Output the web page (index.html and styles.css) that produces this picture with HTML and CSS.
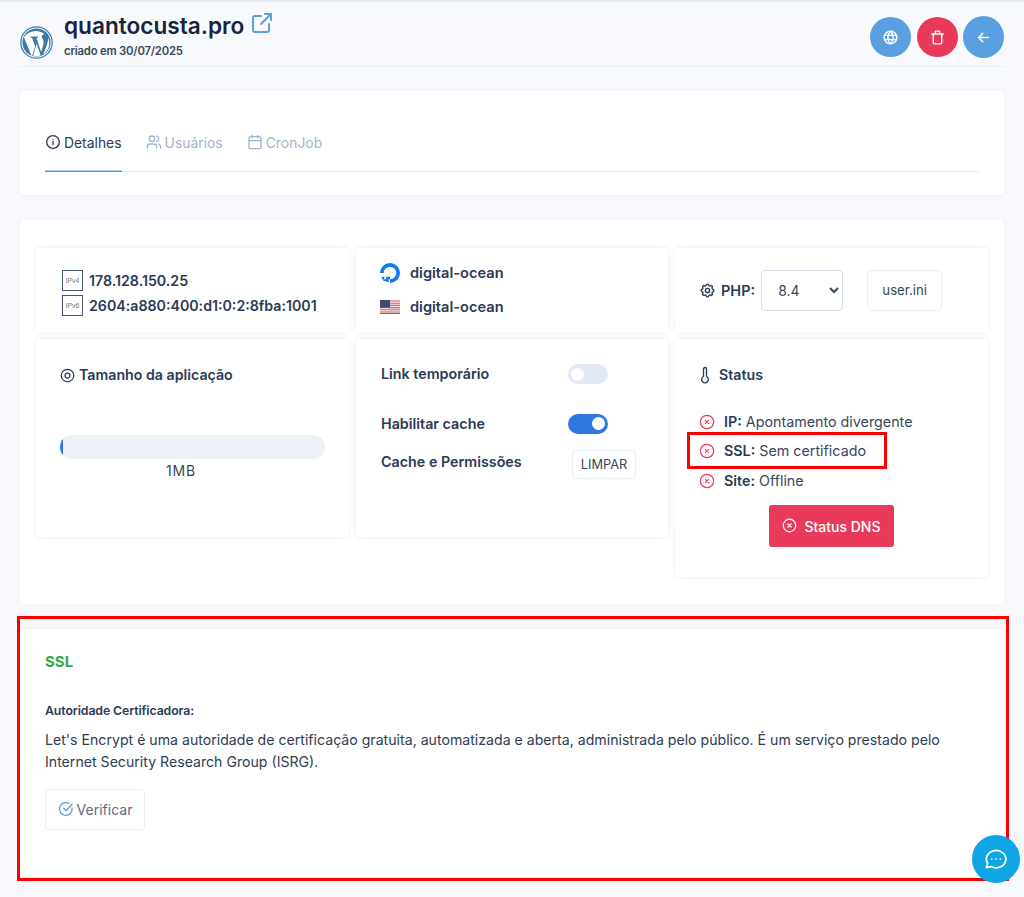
FILE: index.html
```html
<!DOCTYPE html>
<html lang="pt">
<head>
<meta charset="utf-8">
<title>quantocusta.pro</title>
<link rel="stylesheet" href="styles.css">
</head>
<body>
<div class="page">
  <header class="head">
    <div class="brand">
      <svg class="wp" viewBox="0 0 32 32"><circle cx="16" cy="16" r="15.2" fill="none" stroke="#3c7ba5" stroke-width="1.2"/><circle cx="16" cy="16" r="13.600" fill="#3c7ba5"/><path d="M3.800 11 11.500 29.500l3.200-9.700-3-8.300-1.600-.2v-1.200h7.400v1.200l-1.600.2 4.600 13.600 1.500-5c.8-2.400.9-3.700.9-4.800 0-2-1.400-3-1.700-4.600-.2-1.200.8-2.700 2.300-2.700h.4A13.600 13.600 0 0 0 3.800 11z" fill="#fff"/><path d="M16.200 17.200 12.700 28.900a13.600 13.600 0 0 0 7.300-.2zM27.200 10.800c.2 3.400-.5 5.600-1.400 8l-3.300 8.900a13.600 13.600 0 0 0 4.700-16.900z" fill="#fff"/></svg>
      <div class="titles">
        <h1 class="site">quantocusta.pro <svg class="ext" viewBox="0 0 24 24" fill="none" stroke="#5b9fe0" stroke-width="2" stroke-linecap="round" stroke-linejoin="round"><path d="M11 5H5a2 2 0 0 0-2 2v12a2 2 0 0 0 2 2h12a2 2 0 0 0 2-2v-6"/><path d="M11 13 21 3"/><path d="M15 3h6v6"/></svg></h1>
        <p class="created">criado em 30/07/2025</p>
      </div>
    </div>
    <div class="actions">
      <button class="round blue"><svg viewBox="0 0 24 24" fill="none" stroke="#fff" stroke-width="2"><circle cx="12" cy="12" r="9"/><path d="M3 9h18M3 15h18"/><path d="M12 3c-5 5-5 13 0 18M12 3c5 5 5 13 0 18"/></svg></button>
      <button class="round red"><svg viewBox="0 0 24 24" fill="none" stroke="#fff" stroke-width="2" stroke-linecap="round" stroke-linejoin="round"><path d="M4 7h16"/><path d="M6 7v12a2 2 0 0 0 2 2h8a2 2 0 0 0 2-2V7"/><path d="M9 7V4a1 1 0 0 1 1-1h4a1 1 0 0 1 1 1v3"/></svg></button>
      <button class="round blue big"><svg viewBox="0 0 24 24" fill="none" stroke="#fff" stroke-width="2" stroke-linecap="round" stroke-linejoin="round"><path d="M19 12H5"/><path d="m11 6-6 6 6 6"/></svg></button>
    </div>
  </header>

  <section class="card tabs-card">
    <nav class="tabs">
      <a class="tab active"><svg viewBox="0 0 24 24" fill="none" stroke="currentColor" stroke-width="2" stroke-linecap="round"><circle cx="12" cy="12" r="9.500"/><path d="M12 11v5M12 8h.01"/></svg>Detalhes</a>
      <a class="tab"><svg viewBox="0 0 24 24" fill="none" stroke="currentColor" stroke-width="2" stroke-linecap="round" stroke-linejoin="round"><circle cx="9" cy="7" r="4"/><path d="M2 21v-2a4 4 0 0 1 4-4h6a4 4 0 0 1 4 4v2"/><path d="M16 3.100a4 4 0 0 1 0 7.800M22 21v-2a4 4 0 0 0-3-3.900"/></svg>Usuários</a>
      <a class="tab"><svg viewBox="0 0 24 24" fill="none" stroke="currentColor" stroke-width="2" stroke-linecap="round" stroke-linejoin="round"><rect x="3" y="4" width="18" height="18" rx="2"/><path d="M16 2v4M8 2v4M3 10h18"/></svg>CronJob</a>
    </nav>
  </section>

  <section class="card details">
    <div class="grid">
      <div class="box ips">
        <div class="ip"><span class="ipimg">IPv4</span><span>178.128.150.25</span></div>
        <div class="ip"><span class="ipimg">IPv6</span><span>2604:a880:400:d1:0:2:8fba:1001</span></div>
      </div>
      <div class="box hosts">
        <div class="host"><svg class="hicon" viewBox="0 0 20 20"><path d="M10 20v-3.800A6.200 6.200 0 1 0 3.800 10H0a10 10 0 1 1 10 10z" fill="#0a7df5"/><path d="M6.200 13.800H10v2.400H6.200zM6.200 16.200h2.400V19H6.200zM3.400 16.200h2.800V18H3.400zM1.800 13.800h2.400v2.400H1.800z" fill="#0a7df5"/></svg><span>digital-ocean</span></div>
        <div class="host"><svg class="hicon flag" viewBox="0 0 20 14"><rect width="20" height="14" fill="#f4eaea"/><path d="M0 1h20M0 3.200h20M0 5.400h20M0 7.600h20M0 9.800h20M0 12h20" stroke="#d5656a" stroke-width="1.100"/><rect y="13" width="20" height="1" fill="#cc4a50"/><rect width="10" height="7.500" fill="#3d4a74"/></svg><span>digital-ocean</span></div>
      </div>
      <div class="box php">
        <svg class="lead gear" viewBox="0 0 24 24" fill="none" stroke="#2b3a55" stroke-width="2" stroke-linecap="round" stroke-linejoin="round"><path d="M10.300 4.300c.4-1.800 3-1.800 3.400 0a1.700 1.700 0 0 0 2.600 1.100c1.500-.9 3.300.8 2.300 2.300a1.700 1.700 0 0 0 1.100 2.600c1.800.4 1.800 3 0 3.400a1.700 1.700 0 0 0-1.100 2.600c.9 1.500-.8 3.300-2.300 2.300a1.700 1.700 0 0 0-2.600 1.100c-.4 1.800-3 1.800-3.400 0a1.700 1.700 0 0 0-2.600-1.100c-1.500.9-3.300-.8-2.300-2.300a1.700 1.700 0 0 0-1.100-2.600c-1.800-.4-1.800-3 0-3.400a1.700 1.700 0 0 0 1.100-2.600c-.9-1.500.8-3.300 2.300-2.300a1.700 1.700 0 0 0 2.600-1.100z"/><circle cx="12" cy="12" r="3"/></svg>
        <strong class="label">PHP:</strong>
        <select class="select"><option>8.4</option></select>
        <button class="btn ini">user.ini</button>
      </div>

      <div class="box size">
        <h3 class="boxtitle"><svg class="lead small" viewBox="0 0 24 24" fill="none" stroke="#2b3a55" stroke-width="2"><circle cx="12" cy="12" r="10"/><circle cx="12" cy="12" r="4"/></svg>Tamanho da aplicação</h3>
        <div class="bar"><div class="fill"></div></div>
        <p class="barlabel">1MB</p>
      </div>

      <div class="box toggles">
        <div class="trow first"><span>Link temporário</span><span class="switch"><i></i></span></div>
        <div class="trow second"><span>Habilitar cache</span><span class="switch on"><i></i></span></div>
        <div class="trow third"><span>Cache e Permissões</span><button class="btn limpar">LIMPAR</button></div>
      </div>

      <div class="box status">
        <h3 class="boxtitle stitle"><svg class="lead therm" viewBox="0 0 12 24" fill="none" stroke="#2b3a55" stroke-width="1.800" stroke-linecap="round" stroke-linejoin="round"><path d="M4 14V4a2 2 0 0 1 4 0v10a4.500 4.500 0 1 1-4 0z"/></svg>Status</h3>
        <ul class="checks">
          <li><svg viewBox="0 0 24 24" fill="none" stroke="#ea3a5c" stroke-width="1.800" stroke-linecap="round"><circle cx="12" cy="12" r="10"/><path d="m9.500 9.500 5 5m0-5-5 5"/></svg><span><b>IP:</b> Apontamento divergente</span></li>
          <li><svg viewBox="0 0 24 24" fill="none" stroke="#ea3a5c" stroke-width="1.800" stroke-linecap="round"><circle cx="12" cy="12" r="10"/><path d="m9.500 9.500 5 5m0-5-5 5"/></svg><span><b>SSL:</b> Sem certificado</span></li>
          <li class="site-row"><svg viewBox="0 0 24 24" fill="none" stroke="#ea3a5c" stroke-width="1.800" stroke-linecap="round"><circle cx="12" cy="12" r="10"/><path d="m9.500 9.500 5 5m0-5-5 5"/></svg><span><b>Site:</b> Offline</span></li>
        </ul>
        <button class="dns"><svg viewBox="0 0 24 24" fill="none" stroke="#fff" stroke-width="2" stroke-linecap="round"><circle cx="12" cy="12" r="10"/><path d="m9.500 9.500 5 5m0-5-5 5"/></svg>Status DNS</button>
      </div>
    </div>
  </section>

  <section class="card ssl">
    <h2 class="ssltitle">SSL</h2>
    <h4 class="authority">Autoridade Certificadora:</h4>
    <p class="desc">Let's Encrypt é uma autoridade de certificação gratuita, automatizada e aberta, administrada pelo público. É um serviço prestado pelo Internet Security Research Group (ISRG).</p>
    <button class="btn verify"><svg viewBox="0 0 24 24" fill="none" stroke="#5b9fe0" stroke-width="2" stroke-linecap="round" stroke-linejoin="round"><path d="M21 10.500A9.500 9.500 0 1 1 16 3.600"/><path d="m8.500 11 3.500 3.500 9-9.500"/></svg>Verificar</button>
  </section>
</div>

<div class="mark mark-ssl"></div>
<div class="mark mark-card"></div>
<button class="chat"><svg viewBox="0 0 24 24" fill="none" stroke="#fff" stroke-width="1.600" stroke-linecap="round" stroke-linejoin="round"><path d="M3 20l1.300-3.900A9 8 0 1 1 7.500 19z"/><path d="M8 12h.01M12 12h.01M16 12h.01"/></svg></button>
</body>
</html>
```
FILE: styles.css
```css
* { box-sizing: border-box; }
html, body { margin: 0; height: 100%; }
body {
  background: #f8f9fc;
  font-family: Inter, "Open Sans", sans-serif;
  color: #2b3a55;
  font-size: 14px;
  overflow: hidden;
  border-top: 2px solid #e9ecf2;
}
button { font-family: inherit; }
.page { padding: 0 20px; }

.head {
  height: 65px;
  border-bottom: 1px solid #e9eef6;
  display: flex;
  justify-content: space-between;
  align-items: flex-start;
}
.brand { display: flex; align-items: flex-start; }
.wp { width: 33px; height: 33px; margin-top: 24px; }
.titles { margin-left: 11px; padding-top: 10px; }
.site {
  margin: 0;
  font-size: 22.600px;
  line-height: 27px;
  font-weight: 600;
  color: #16243d;
  display: flex;
  align-items: flex-start;
  gap: 6px;
}
.ext { width: 24px; height: 24px; margin-top: -1px; }
.created {
  margin: 5px 0 0;
  font-size: 11.300px;
  line-height: 14px;
  font-weight: 600;
  letter-spacing: -0.2px;
  color: #3a4759;
}
.actions { display: flex; gap: 6px; padding-top: 15px; }
.round {
  width: 41px;
  height: 40px;
  border: 0;
  border-radius: 50%;
  padding: 0;
  display: flex;
  align-items: center;
  justify-content: center;
}
.round svg { width: 17px; height: 17px; }
.blue { background: #5a9fe0; }
.red { background: #ea3a5c; }
.big { margin: -1px 0 0 -1px; height: 42px; }

.card {
  background: #fff;
  border-radius: 5px;
  box-shadow: 0 0 6px rgba(60, 80, 120, 0.05);
}
.tabs-card { margin-top: 24px; height: 104px; padding: 34px 25px 0; }
.tabs {
  display: flex;
  gap: 24px;
  height: 47px;
  border-bottom: 1px solid #e5ecf6;
}
.tab {
  display: flex;
  align-items: flex-start;
  gap: 3px;
  padding-top: 9px;
  height: 46px;
  font-size: 13.900px;
  line-height: 18px;
  color: #a3b4cd;
}
.tab svg { width: 16px; height: 16px; margin-top: 0; }
.tab.active { color: #2b3a55; box-shadow: 0 1px 0 #4a94ef, inset 0 -1px 0 #a9cdf8; }

.details { margin-top: 25px; height: 384px; padding: 28px 17px 0 16px; }
.grid {
  display: grid;
  grid-template-columns: 313px 312px 313px;
  column-gap: 7px;
  row-gap: 7px;
  align-items: start;
}
.box {
  background: #fff;
  border-radius: 4px;
  box-shadow: 0 0 5px rgba(60, 80, 120, 0.12);
}
.ips { height: 84px; padding: 20px 25px 0 26px; }
.ip {
  display: flex;
  align-items: center;
  gap: 6px;
  height: 25px;
  font-size: 14.200px;
  font-weight: 600;
  color: #2b3a55;
}
.ipimg {
  width: 21px;
  height: 21px;
  border: 1px solid #46546f;
  font-size: 7px;
  font-family: "Liberation Sans", sans-serif;
  font-weight: 400;
  color: #777;
  display: flex;
  align-items: center;
  justify-content: center;
  flex: none;
}
.hosts { height: 84px; padding: 8px 24px 0; }
.host {
  display: flex;
  align-items: center;
  gap: 10px;
  height: 34px;
  font-size: 14.600px;
  font-weight: 600;
}
.hicon { width: 20px; height: 20px; flex: none; }
.flag { height: 14px; }
.php {
  height: 84px;
  padding: 0 0 0 24px;
  display: flex;
  align-items: center;
}
.lead { width: 16px; height: 16px; flex: none; }
.gear { width: 17px; height: 17px; }
.label { margin-left: 5px; font-weight: 600; font-size: 14.500px; }
.select {
  margin-left: 6px;
  width: 82px;
  height: 41px;
  border: 1px solid #d5deeb;
  border-radius: 4px;
  background: #fff;
  font-family: inherit;
  font-size: 14px;
  color: #3a4759;
  padding-left: 12px;
}
.btn {
  background: #fff;
  border: 1px solid #e8edf6;
  border-radius: 4px;
  color: #3a4759;
  font-size: 13.200px;
  cursor: pointer;
}
.ini { margin-left: 24px; width: 75px; height: 41px; }

.size { height: 198px; padding: 27px 24px 0; }
.boxtitle {
  margin: 0;
  font-size: 14.200px;
  line-height: 18px;
  font-weight: 600;
  display: flex;
  align-items: center;
  gap: 4px;
}
.small { width: 15px; height: 15px; }
.bar {
  margin-top: 51px;
  height: 24px;
  border-radius: 12px;
  background: #edf1f8;
  overflow: hidden;
}
.fill { width: 1%; height: 100%; background: #2e79e0; }
.barlabel {
  margin: 3px 0 0;
  padding-right: 23px;
  text-align: center;
  font-size: 14px;
  line-height: 18px;
  letter-spacing: 0.8px;
  color: #3a4759;
}

.toggles { height: 198px; padding: 0 32px 0 25px; }
.trow {
  display: flex;
  justify-content: space-between;
  align-items: center;
  font-size: 14.300px;
  font-weight: 600;
}
.first { margin-top: 25px; height: 20px; padding-right: 28px; }
.first span:first-child, .second span:first-child { line-height: 20px; }
.second { margin-top: 29px; height: 21px; padding-right: 28px; }
.third { margin-top: 16px; height: 30px; align-items: flex-start; }
.third span { margin-top: 3px; }
.switch {
  width: 40px;
  height: 20px;
  border-radius: 10px;
  background: #e2e9f5;
  display: flex;
  align-items: center;
  padding: 0 3px;
}
.switch i { width: 13px; height: 13px; border-radius: 50%; background: #fff; }
.switch.on { background: #2e79e0; justify-content: flex-end; }
.limpar { width: 64px; height: 29px; font-size: 12.800px; font-weight: 400; padding: 0; }

.status { height: 238px; padding: 27px 24px 0; }
.stitle { gap: 8px; }
.therm { width: 12px; height: 18px; }
.checks { list-style: none; margin: 23px 0 0; padding: 0; }
.checks li {
  display: flex;
  align-items: center;
  height: 29px;
  font-size: 14.300px;
  gap: 9px;
  color: #3a4759;
}
.checks li svg { width: 16px; height: 16px; flex: none; }
.checks b { font-weight: 600; color: #2b3a55; }
.checks .site-row { height: 30px; padding-top: 1px; }
.dns {
  display: flex;
  align-items: center;
  justify-content: center;
  gap: 7px;
  width: 125px;
  height: 42px;
  margin: 10px 0 0 70px;
  border: 0;
  border-radius: 3px;
  background: #ea3a5c;
  color: #fff;
  font-size: 14px;
  font-weight: 500;
}
.dns svg { width: 15px; height: 15px; margin-top: -2px; }

.ssl { margin-top: 25px; height: 248px; padding: 24px 25px 0; }
.ssltitle { margin: 0; font-size: 15px; line-height: 18px; font-weight: 700; color: #33ab3f; }
.authority { margin: 32px 0 0; font-size: 12.300px; line-height: 16px; font-weight: 600; letter-spacing: -0.1px; color: #2b3a55; }
.desc { margin: 10px 0 0; font-size: 14.130px; line-height: 22px; color: #2f3e55; }
.verify {
  margin-top: 16px;
  width: 100px;
  height: 41px;
  display: flex;
  align-items: center;
  justify-content: center;
  gap: 3px;
  font-size: 14px;
  color: #5f6d82;
}
.verify svg { width: 16px; height: 16px; margin-top: -2px; }

.mark { position: absolute; border: 3px solid #ff0000; pointer-events: none; }
.mark-ssl { left: 687px; top: 432px; width: 200px; height: 37px; }
.mark-card { left: 17px; top: 616px; width: 992px; height: 265px; }
.chat {
  position: absolute;
  left: 972px;
  top: 835px;
  width: 48px;
  height: 48px;
  border: 0;
  border-radius: 50%;
  background: #0ea5e4;
  padding: 0;
  display: flex;
  align-items: center;
  justify-content: center;
}
.chat svg { width: 26px; height: 26px; }
```
